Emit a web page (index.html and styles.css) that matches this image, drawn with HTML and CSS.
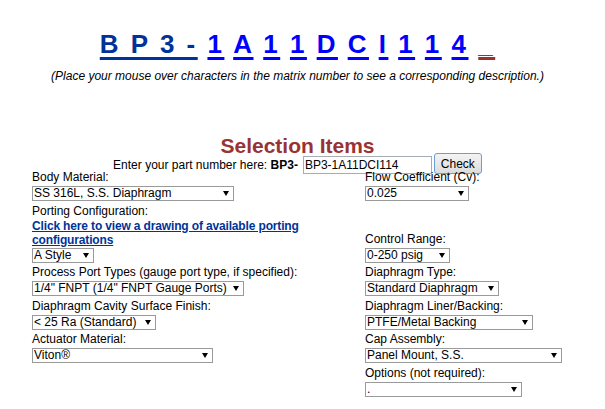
FILE: index.html
```
<!DOCTYPE html>
<html lang="en">
<head>
<meta charset="UTF-8">
<meta name="viewport" content="width=device-width, initial-scale=1.0">
<title>BP3 Matrix Number</title>
<link rel="stylesheet" href="styles.css">
</head>
<body>

<div class="page">
    <h1 class="matrix">
        <a href="#" class="prefix">B P 3 -</a>
        <a href="#">1</a>
        <a href="#">A</a>
        <a href="#">1</a>
        <a href="#">1</a>
        <a href="#">D</a>
        <a href="#">C</a>
        <a href="#">I</a>
        <a href="#">1</a>
        <a href="#">1</a>
        <a href="#">4</a>
        <a href="#" class="blank">_</a>
    </h1>
    <p class="hint">(Place your mouse over characters in the matrix number to see a corresponding description.)</p>

    <h2 class="title">Selection Items</h2>
    <form class="lookup">
        <span>Enter your part number here: <b>BP3-</b></span>
        <input type="text" class="partno" value="BP3-1A11DCI114">
        <button type="submit" class="check">Check</button>
    </form>

    <div class="options">
        <div class="field">
            <label>Body Material:</label>
            <span class="pick pick-body"><select><option>SS 316L, S.S. Diaphragm</option></select></span>
        </div>
        <div class="field">
            <label>Flow Coefficient (Cv):</label>
            <span class="pick pick-flow"><select><option>0.025</option></select></span>
        </div>

        <div class="field">
            <label>Porting Configuration:</label>
            <a href="#" class="drawing">Click here to view a drawing of available porting configurations</a>
            <span class="pick pick-port"><select><option>A Style</option></select></span>
        </div>
        <div class="field">
            <label>Control Range:</label>
            <span class="pick pick-range"><select><option>0-250 psig</option></select></span>
        </div>

        <div class="field">
            <label>Process Port Types (gauge port type, if specified):</label>
            <span class="pick pick-process"><select><option>1/4" FNPT (1/4" FNPT Gauge Ports)</option></select></span>
        </div>
        <div class="field">
            <label>Diaphragm Type:</label>
            <span class="pick pick-type"><select><option>Standard Diaphragm</option></select></span>
        </div>

        <div class="field">
            <label>Diaphragm Cavity Surface Finish:</label>
            <span class="pick pick-finish"><select><option>&lt; 25 Ra (Standard)</option></select></span>
        </div>
        <div class="field">
            <label>Diaphragm Liner/Backing:</label>
            <span class="pick pick-liner"><select><option>PTFE/Metal Backing</option></select></span>
        </div>

        <div class="field">
            <label>Actuator Material:</label>
            <span class="pick pick-actuator"><select><option>Viton&reg;</option></select></span>
        </div>
        <div class="field">
            <label>Cap Assembly:</label>
            <span class="pick pick-cap"><select><option>Panel Mount, S.S.</option></select></span>
        </div>

        <div class="field"></div>
        <div class="field">
            <label>Options (not required):</label>
            <span class="pick pick-extra"><select><option>.</option></select></span>
        </div>
    </div>
</div>

</body>
</html>
```

FILE: styles.css
```
body {
    font-family: "Liberation Sans", Arial, sans-serif;
    margin: 0;
    padding: 0;
    background-color: #fff;
    color: #000;
}
.page {
    width: 575px;
    margin-left: 10px;
}
.matrix {
    margin: 29px 0 0;
    font-size: 26px;
    line-height: 30px;
    font-weight: bold;
    letter-spacing: 2.5px;
    text-align: center;
}
.matrix a {
    color: #0000ff;
    text-decoration: underline;
    text-decoration-thickness: 3px;
    text-underline-offset: 4px;
}
.matrix .prefix {
    color: #003399;
}
.matrix .blank {
    color: #993333;
}
.hint {
    margin: 10px 0 0;
    font-size: 12px;
    line-height: 14px;
    font-style: italic;
    text-align: center;
}
.title {
    margin: 52px 0 0;
    font-size: 21px;
    line-height: 21px;
    color: #993333;
    text-align: center;
}
.lookup {
    display: flex;
    justify-content: center;
    align-items: center;
    height: 14px;
    margin: 2px 0 0;
    font-size: 12px;
    line-height: 14px;
}
.partno {
    box-sizing: border-box;
    width: 129px;
    height: 18px;
    margin: 0 0 0 5px;
    padding: 0 1px;
    border: 1px solid #a5acb5;
    font-family: inherit;
    font-size: 12px;
}
.check {
    box-sizing: border-box;
    width: 48px;
    height: 21px;
    margin: 0 0 3px 2px;
    padding: 0;
    border: 1px solid #6f9cd6;
    border-radius: 3px;
    background: linear-gradient(#f4f4f4, #dcdcdc);
    font-family: inherit;
    font-size: 12px;
    color: #000;
}
.options {
    display: grid;
    grid-template-columns: 333px 1fr;
    row-gap: 2.5px;
    align-items: end;
    margin: -2px 0 0 22px;
    font-size: 12px;
}
.field label {
    display: block;
    line-height: 15px;
}
.drawing {
    display: block;
    width: 300px;
    line-height: 14px;
    font-weight: bold;
    letter-spacing: -0.15px;
    color: #003399;
}
.pick {
    display: block;
    position: relative;
    height: 15px;
    margin-top: 1px;
}
.pick::after {
    content: "";
    position: absolute;
    right: 5px;
    top: 5px;
    border-left: 3px solid transparent;
    border-right: 3px solid transparent;
    border-top: 5px solid #000;
    pointer-events: none;
}
.pick select {
    appearance: none;
    box-sizing: border-box;
    width: 100%;
    height: 15px;
    margin: 0;
    padding: 0 0 0 1px;
    border: 1px solid #9a9a9a;
    border-radius: 0;
    background-color: #fff;
    font-family: inherit;
    font-size: 12px;
    line-height: 13px;
    color: #000;
}
.pick-body { width: 202px; }
.pick-port { width: 62px; }
.pick-process { width: 212px; }
.pick-finish { width: 124px; }
.pick-actuator { width: 181px; }
.pick-flow { width: 104px; }
.pick-range { width: 85px; }
.pick-type { width: 134px; }
.pick-liner { width: 168px; }
.pick-cap { width: 197px; }
.pick-extra { width: 157px; }
```
